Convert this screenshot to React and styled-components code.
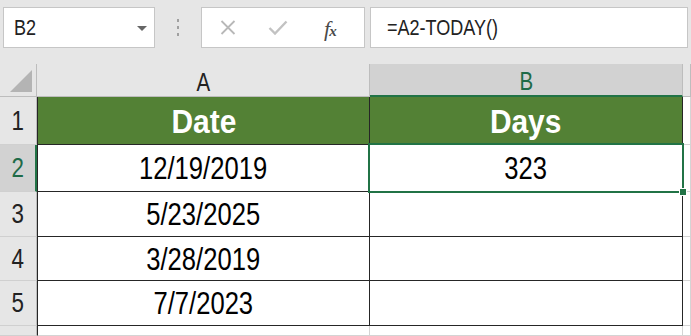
import React from "react";
import styled, { createGlobalStyle } from "styled-components";

const Global = createGlobalStyle`
  html, body { margin: 0; padding: 0; background: #e6e6e6; }
  body { width: 691px; height: 336px; overflow: hidden; font-family: "Liberation Sans", Arial, sans-serif; }
  * { box-sizing: border-box; }
`;

const SANS = `"Liberation Sans", Arial, sans-serif`;

const Squeeze = styled.span`
  display: inline-block;
  white-space: nowrap;
  transform: scaleX(${(p) => p.$x || 0.8});
  transform-origin: ${(p) => p.$origin || "center"};
`;

const Page = styled.div`
  width: 691px;
  height: 336px;
  display: flex;
  flex-direction: column;
  background: #e6e6e6;
`;

const Toolbar = styled.div`
  height: 64px;
  flex: none;
  display: flex;
  align-items: flex-start;
  padding: 7px 3px 0 3px;
  background: #e6e6e6;
`;

const Box = styled.div`
  height: 41px;
  background: #fff;
  border: 1px solid #c6c6c6;
  display: flex;
  align-items: center;
`;

const NameBox = styled(Box)`
  width: 152px;
  padding: 0 7px 0 10px;
  justify-content: space-between;
  font-family: ${SANS};
  font-size: 22px;
  color: #222;
`;

const Caret = styled.span`
  width: 0;
  height: 0;
  border-left: 5px solid transparent;
  border-right: 5px solid transparent;
  border-top: 5px solid #666;
  margin-top: 1px;
`;

const Grip = styled.div`
  width: 46px;
  height: 41px;
  display: flex;
  align-items: center;
  justify-content: center;
`;

const FxGroup = styled(Box)`
  width: 164px;
  padding-left: 18px;
`;

const IconSlot = styled.span`
  width: 54px;
  display: flex;
  align-items: center;
`;

const FxText = styled.span`
  font-family: "Liberation Serif", "DejaVu Serif", serif;
  font-style: italic;
  font-size: 22px;
  color: #4a4a4a;
  line-height: 1;
  margin-left: 8px;
  margin-top: 2px;
  letter-spacing: -1px;
  & small {
    font-size: 15px;
    font-weight: bold;
  }
`;

const FormulaBox = styled(Box)`
  margin-left: 5px;
  flex: 1;
  padding-left: 16px;
  font-family: ${SANS};
  font-size: 22px;
  color: #222;
`;

const Sheet = styled.div`
  flex: 1;
  display: grid;
  grid-template-columns: 37px 333px 313px 1fr;
  grid-template-rows: 33px 48px 47px 45px 44px 45px 1fr;
  background: #fff;
  overflow: hidden;
`;

const Corner = styled.div`
  background: #e6e6e6;
  border-right: 1px solid #bdbdbd;
  border-bottom: 1px solid #bdbdbd;
  position: relative;
  &::after {
    content: "";
    position: absolute;
    right: 4px;
    bottom: 4px;
    width: 0;
    height: 0;
    border-left: 22px solid transparent;
    border-bottom: 22px solid #b4b4b4;
  }
`;

const ColHead = styled.div`
  background: ${(p) => (p.$active ? "#d2d2d2" : "#e6e6e6")};
  color: ${(p) => (p.$active ? "#1f6b48" : "#222")};
  border-right: 1px solid #bdbdbd;
  border-bottom: ${(p) => (p.$active ? "2px solid #217346" : "1px solid #bdbdbd")};
  display: flex;
  align-items: center;
  justify-content: center;
  padding-top: 4px;
  font-family: ${SANS};
  font-size: 25px;
`;

const RowHead = styled.div`
  background: ${(p) => (p.$active ? "#d2d2d2" : "#e6e6e6")};
  color: ${(p) => (p.$active ? "#1f6b48" : "#222")};
  border-bottom: 1px solid #d0d0d0;
  border-right: ${(p) => (p.$active ? "2px solid #217346" : "1px solid #bdbdbd")};
  display: flex;
  align-items: center;
  justify-content: center;
  font-family: ${SANS};
  font-size: 28px;
`;

const Cell = styled.div`
  position: relative;
  background: ${(p) => (p.$head ? "#538135" : "#fff")};
  color: ${(p) => (p.$head ? "#fff" : "#000")};
  font-weight: ${(p) => (p.$head ? "bold" : "normal")};
  font-size: ${(p) => (p.$head ? "34px" : "32px")};
  font-family: ${SANS};
  border-right: 1px solid ${(p) => (p.$plain ? "#d4d4d4" : "#262626")};
  border-bottom: 1px solid ${(p) => (p.$plain ? "#d4d4d4" : "#262626")};
  border-left: ${(p) => (p.$first ? "1px solid #262626" : "0")};
  display: flex;
  align-items: center;
  justify-content: center;
  padding-top: ${(p) => (p.$head ? "2px" : "1px")};
`;

const Selection = styled.div`
  position: absolute;
  z-index: 3;
  left: -2px;
  top: -2px;
  right: -2px;
  bottom: -2px;
  border: 2px solid #217346;
  pointer-events: none;
`;

const FillHandle = styled.div`
  position: absolute;
  right: -5px;
  bottom: -5px;
  width: 8px;
  height: 8px;
  background: #217346;
  border: 1px solid #fff;
`;

const rows = [
  { n: 1, a: "Date", b: "Days", head: true },
  { n: 2, a: "12/19/2019", b: "323", active: true },
  { n: 3, a: "5/23/2025", b: "" },
  { n: 4, a: "3/28/2019", b: "" },
  { n: 5, a: "7/7/2023", b: "" },
];

export default function App() {
  return (
    <>
      <Global />
      <Page>
        <Toolbar>
          <NameBox>
            <Squeeze $x={0.82} $origin="left">B2</Squeeze>
            <Caret />
          </NameBox>
          <Grip>
            <svg width="4" height="18" viewBox="0 0 4 18">
              <rect x="1" y="0" width="2" height="3" fill="#a0a0a0" />
              <rect x="1" y="7" width="2" height="3" fill="#a0a0a0" />
              <rect x="1" y="14" width="2" height="3" fill="#a0a0a0" />
            </svg>
          </Grip>
          <FxGroup>
            <IconSlot>
              <svg width="16" height="15" viewBox="0 0 16 15">
                <path d="M1.5 1 L14.5 14 M14.5 1 L1.5 14" stroke="#b8b8b8" strokeWidth="1.8" fill="none" />
              </svg>
            </IconSlot>
            <IconSlot>
              <svg width="20" height="15" viewBox="0 0 20 15">
                <path d="M1.5 8 L7 13.5 L18.5 1.5" stroke="#c2c2c2" strokeWidth="2.4" fill="none" />
              </svg>
            </IconSlot>
            <IconSlot>
              <FxText>
                f<small>x</small>
              </FxText>
            </IconSlot>
          </FxGroup>
          <FormulaBox>
            <Squeeze $x={0.82} $origin="left">=A2-TODAY()</Squeeze>
          </FormulaBox>
        </Toolbar>
        <Sheet>
          <Corner />
          <ColHead>
            <Squeeze $x={0.82}>A</Squeeze>
          </ColHead>
          <ColHead $active>
            <Squeeze $x={0.82}>B</Squeeze>
          </ColHead>
          <ColHead />
          {rows.map((r) => (
            <React.Fragment key={r.n}>
              <RowHead $active={r.active}>
                <Squeeze $x={0.8}>{r.n}</Squeeze>
              </RowHead>
              <Cell $head={r.head} $first>
                <Squeeze $x={r.head ? 0.88 : 0.8}>{r.a}</Squeeze>
              </Cell>
              <Cell $head={r.head}>
                <Squeeze $x={r.head ? 0.88 : 0.8}>{r.b}</Squeeze>
                {r.active && (
                  <Selection>
                    <FillHandle />
                  </Selection>
                )}
              </Cell>
              <Cell $plain />
            </React.Fragment>
          ))}
          <RowHead />
          <Cell $plain $first />
          <Cell $plain />
          <Cell $plain />
        </Sheet>
      </Page>
    </>
  );
}
